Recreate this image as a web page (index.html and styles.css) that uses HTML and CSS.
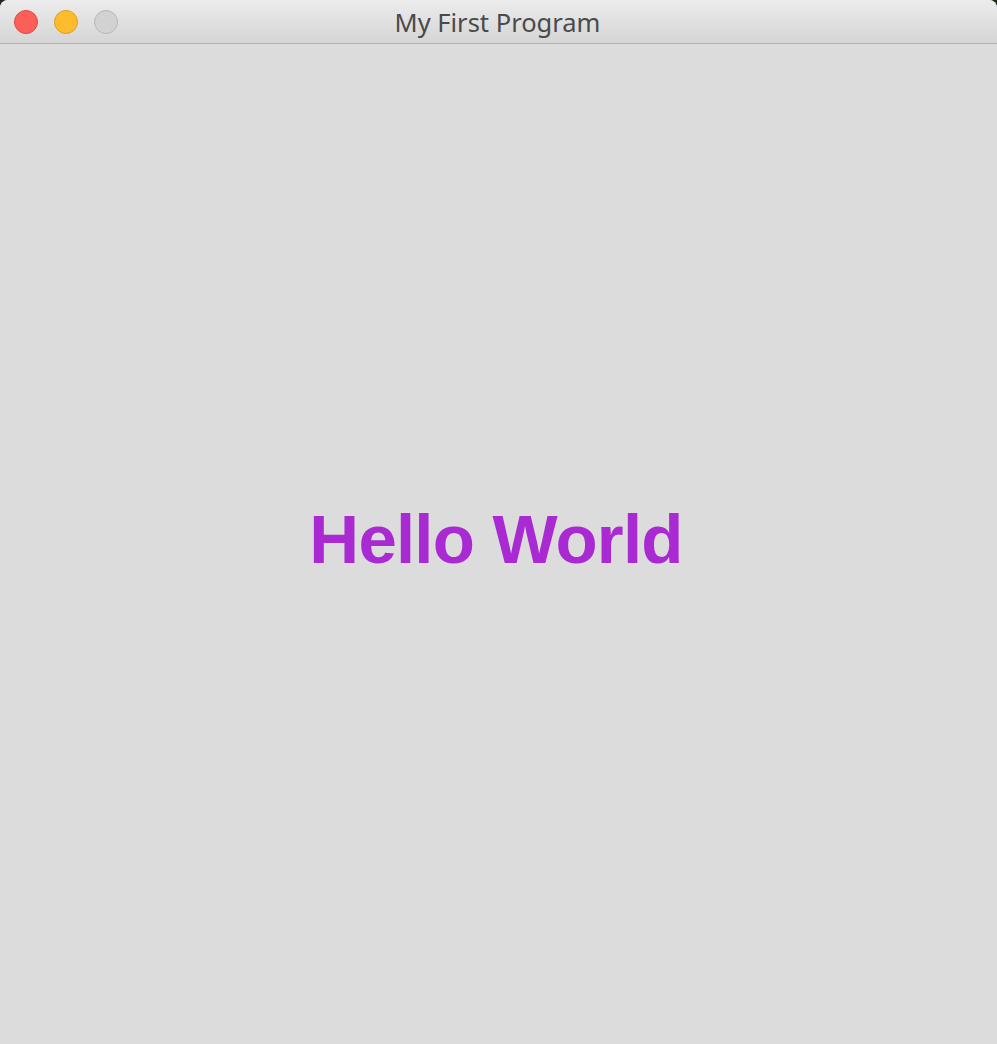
FILE: index.html
```html
<!DOCTYPE html>
<html>
<head>
<meta charset="utf-8">
<link rel="stylesheet" href="styles.css">
</head>
<body>
<div class="window">
  <div class="titlebar">
    <div class="lights">
      <span class="light close"></span>
      <span class="light min"></span>
      <span class="light zoom"></span>
    </div>
    <div class="title">My First Program</div>
  </div>
  <div class="content">
    <div class="hello">Hello World</div>
  </div>
</div>
</body>
</html>
```
FILE: styles.css
```css
html, body {
  margin: 0;
  padding: 0;
  background: #1f2a1c;
}
.window {
  width: 997px;
  height: 1044px;
  display: flex;
  flex-direction: column;
  background: #dcdcdc;
  border-radius: 8px 8px 0 0;
  overflow: hidden;
}
.titlebar {
  position: relative;
  height: 43px;
  flex: none;
  background: linear-gradient(#ececec, #d5d5d5);
  border-bottom: 1px solid #b3b3b3;
  display: flex;
  align-items: center;
  justify-content: center;
}
.lights {
  position: absolute;
  left: 14px;
  top: 10px;
  display: flex;
  gap: 16px;
}
.light {
  width: 24px;
  height: 24px;
  border-radius: 50%;
  box-sizing: border-box;
}
.close { background: #fc5f57; border: 1px solid #de4842; }
.min { background: #fdbc2e; border: 1px solid #de9f22; }
.zoom { background: #d2d2d2; border: 1px solid #b8b8b8; }
.title {
  font-family: "Noto Sans", "Open Sans", sans-serif;
  font-size: 25.5px;
  color: #4a4a4a;
  margin-top: 1px;
  margin-left: -2px;
}
.content {
  flex: 1;
  display: flex;
  align-items: center;
  justify-content: center;
}
.hello {
  font-family: "Liberation Sans", Arial, sans-serif;
  font-weight: bold;
  font-size: 69px;
  color: #a92ad2;
  letter-spacing: -0.8px;
  margin-bottom: 9px;
  margin-left: -5px;
}
```
